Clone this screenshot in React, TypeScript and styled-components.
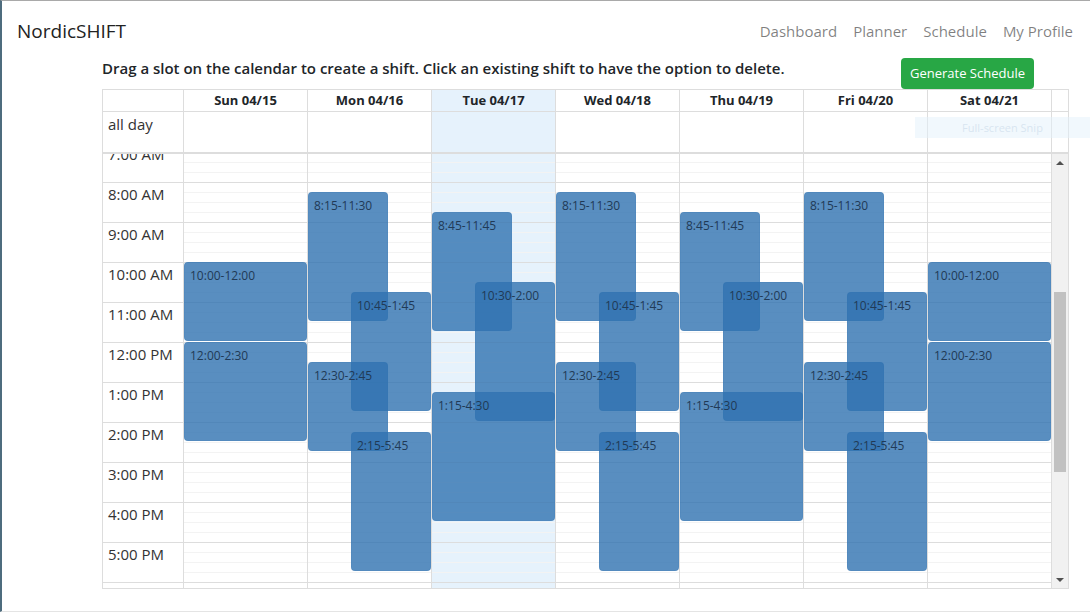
import React from 'react';
import styled, { createGlobalStyle } from 'styled-components';

const GlobalStyle = createGlobalStyle`
  html, body { margin: 0; padding: 0; background: #fff; }
  body { font-family: "Open Sans", "Noto Sans", sans-serif; color: #212529; }
  * { box-sizing: border-box; }
`;

const HOUR_PX = 40;
const FIRST_HOUR = 7;
const HOURS = [7, 8, 9, 10, 11, 12, 13, 14, 15, 16, 17, 18];

const Frame = styled.div`
  position: relative;
  width: 1090px;
  height: 612px;
  overflow: hidden;
  border-left: 2px solid #4e6c7e;
  border-top: 1px solid #a9a9a9;
  border-bottom: 1px solid #e4e4e4;
  display: flex;
  flex-direction: column;
`;

const Navbar = styled.nav`
  height: 57px;
  padding: 2px 9px 0 15px;
  display: flex;
  align-items: center;
`;

const Brand = styled.div`
  font-size: 19px;
  color: #222;
`;

const NavLinks = styled.div`
  margin-left: auto;
  display: flex;
`;

const NavLink = styled.a`
  padding: 0 8px;
  font-size: 15px;
  color: rgba(0, 0, 0, 0.5);
  text-decoration: none;
`;

const Toolbar = styled.div`
  margin-left: 100px;
  width: 967px;
  height: 31px;
  padding-right: 35px;
  display: flex;
  justify-content: space-between;
  align-items: flex-start;
`;

const Instructions = styled.div`
  font-size: 15px;
  font-weight: 600;
  line-height: 21px;
  color: #212529;
`;

const GreenButton = styled.button`
  height: 31px;
  padding: 0 9px;
  border: none;
  border-radius: 4px;
  background: #28a745;
  color: #fff;
  font-family: "Open Sans", sans-serif;
  font-size: 13px;
  line-height: 31px;
`;

const Calendar = styled.div`
  margin-left: 100px;
  width: 967px;
  border: 1px solid #ddd;
`;

const COLS = '81px repeat(7, 124px) 16px';

const HeadRow = styled.div`
  display: grid;
  grid-template-columns: ${COLS};
  border-bottom: 1px solid #ddd;
`;

const HeadCell = styled.div<{ $today?: boolean; $last?: boolean }>`
  height: 21px;
  line-height: 21px;
  text-align: center;
  font-size: 13px;
  font-weight: 700;
  color: #212529;
  background: ${(p) => (p.$today ? '#e6f2fc' : 'transparent')};
  border-right: ${(p) => (p.$last ? 'none' : '1px solid #ddd')};
`;

const AllDayRow = styled.div`
  display: grid;
  grid-template-columns: ${COLS};
  border-bottom: 2px solid #ddd;
`;

const AllDayCell = styled.div<{ $today?: boolean; $last?: boolean }>`
  height: 40px;
  padding: 2px 5px 0;
  font-size: 15px;
  line-height: 20px;
  color: #333;
  background: ${(p) => (p.$today ? '#e6f2fc' : 'transparent')};
  border-right: ${(p) => (p.$last ? 'none' : '1px solid #ddd')};
`;

const Body = styled.div`
  display: flex;
  height: 434px;
`;

const Viewport = styled.div`
  flex: 1;
  overflow: hidden;
`;

const TimeGrid = styled.div`
  margin-top: -12px;
  display: grid;
  grid-template-columns: 81px repeat(7, 124px);
  grid-template-rows: repeat(${HOURS.length}, ${HOUR_PX}px);
`;

const AxisLabel = styled.div<{ $row: number }>`
  grid-column: 1;
  grid-row: ${(p) => p.$row};
  border-top: 1px solid #ddd;
  border-right: 1px solid #ddd;
  padding: 1px 0 0 5px;
  font-size: 15px;
  line-height: 20px;
  color: #333;
  white-space: nowrap;
`;

const DayColumn = styled.div<{ $col: number; $today?: boolean }>`
  position: relative;
  grid-column: ${(p) => p.$col};
  grid-row: 1 / -1;
  border-right: 1px solid #ddd;
  background-color: ${(p) => (p.$today ? '#e6f2fc' : '#fff')};
  background-image:
    repeating-linear-gradient(to bottom, #ddd 0 1px, transparent 1px ${HOUR_PX}px),
    repeating-linear-gradient(to bottom, #f3f3f3 0 1px, transparent 1px 10px);
`;

const Event = styled.div`
  position: absolute;
  border-radius: 4px;
  background: rgba(47, 114, 176, 0.8);
  border: 1px solid rgba(47, 114, 176, 0.15);
  padding: 4px 5px;
  font-size: 12px;
  line-height: 18px;
  color: #213a56;
  white-space: nowrap;
  overflow: hidden;
`;

const Scrollbar = styled.div`
  width: 16px;
  background: #f1f1f1;
  display: flex;
  flex-direction: column;
`;

const ScrollArrow = styled.div<{ $down?: boolean }>`
  height: 17px;
  display: flex;
  align-items: center;
  justify-content: center;
  &::after {
    content: '';
    width: 0;
    height: 0;
    border-left: 4px solid transparent;
    border-right: 4px solid transparent;
    ${(p) => (p.$down ? 'border-top: 4px solid #505050;' : 'border-bottom: 4px solid #505050;')}
  }
`;

const ScrollTrack = styled.div`
  flex: 1;
  display: flex;
  flex-direction: column;
  padding-top: 121px;
`;

const ScrollThumb = styled.div`
  height: 180px;
  margin: 0 2px;
  background: #c1c1c1;
`;

const SnipHint = styled.div`
  position: absolute;
  left: 913px;
  top: 116px;
  width: 175px;
  height: 21px;
  background: rgba(228, 241, 252, 0.5);
  color: rgba(205, 220, 235, 0.7);
  font-size: 11px;
  line-height: 21px;
  text-align: center;
`;

type Slot = 'full' | 'left' | 'right';
type Shift = { start: number; end: number; label: string; slot: Slot };

const MWF: Shift[] = [
  { start: 8.25, end: 11.5, label: '8:15-11:30', slot: 'left' },
  { start: 10.75, end: 13.75, label: '10:45-1:45', slot: 'right' },
  { start: 12.5, end: 14.75, label: '12:30-2:45', slot: 'left' },
  { start: 14.25, end: 17.75, label: '2:15-5:45', slot: 'right' },
];
const TT: Shift[] = [
  { start: 8.75, end: 11.75, label: '8:45-11:45', slot: 'left' },
  { start: 10.5, end: 14, label: '10:30-2:00', slot: 'right' },
  { start: 13.25, end: 16.5, label: '1:15-4:30', slot: 'full' },
];
const WKD: Shift[] = [
  { start: 10, end: 12, label: '10:00-12:00', slot: 'full' },
  { start: 12, end: 14.5, label: '12:00-2:30', slot: 'full' },
];

const DAYS: { title: string; today?: boolean; shifts: Shift[] }[] = [
  { title: 'Sun 04/15', shifts: WKD },
  { title: 'Mon 04/16', shifts: MWF },
  { title: 'Tue 04/17', today: true, shifts: TT },
  { title: 'Wed 04/18', shifts: MWF },
  { title: 'Thu 04/19', shifts: TT },
  { title: 'Fri 04/20', shifts: MWF },
  { title: 'Sat 04/21', shifts: WKD },
];

const fmtHour = (h: number) => {
  const hr = h % 12 === 0 ? 12 : h % 12;
  return `${hr}:00 ${h < 12 ? 'AM' : 'PM'}`;
};

const slotBox = (slot: Slot) => {
  if (slot === 'left') return { left: 0, width: 80 };
  if (slot === 'right') return { left: 43, width: 80 };
  return { left: 0, width: 123 };
};

export default function App() {
  return (
    <>
      <GlobalStyle />
      <Frame>
        <Navbar>
          <Brand>NordicSHIFT</Brand>
          <NavLinks>
            <NavLink>Dashboard</NavLink>
            <NavLink>Planner</NavLink>
            <NavLink>Schedule</NavLink>
            <NavLink>My Profile</NavLink>
          </NavLinks>
        </Navbar>
        <Toolbar>
          <Instructions>
            Drag a slot on the calendar to create a shift. Click an existing shift to have the option to delete.
          </Instructions>
          <GreenButton>Generate Schedule</GreenButton>
        </Toolbar>
        <Calendar>
          <HeadRow>
            <HeadCell />
            {DAYS.map((d) => (
              <HeadCell key={d.title} $today={d.today}>
                {d.title}
              </HeadCell>
            ))}
            <HeadCell $last />
          </HeadRow>
          <AllDayRow>
            <AllDayCell>all day</AllDayCell>
            {DAYS.map((d) => (
              <AllDayCell key={d.title} $today={d.today} />
            ))}
            <AllDayCell $last />
          </AllDayRow>
          <Body>
            <Viewport>
              <TimeGrid>
                {HOURS.map((h, i) => (
                  <AxisLabel key={h} $row={i + 1}>
                    {fmtHour(h)}
                  </AxisLabel>
                ))}
                {DAYS.map((d, i) => (
                  <DayColumn key={d.title} $col={i + 2} $today={d.today}>
                    {d.shifts.map((s) => {
                      const box = slotBox(s.slot);
                      return (
                        <Event
                          key={s.label}
                          style={{
                            top: (s.start - FIRST_HOUR) * HOUR_PX,
                            height: (s.end - s.start) * HOUR_PX - 1,
                            left: box.left,
                            width: box.width,
                          }}
                        >
                          {s.label}
                        </Event>
                      );
                    })}
                  </DayColumn>
                ))}
              </TimeGrid>
            </Viewport>
            <Scrollbar>
              <ScrollArrow />
              <ScrollTrack>
                <ScrollThumb />
              </ScrollTrack>
              <ScrollArrow $down />
            </Scrollbar>
          </Body>
        </Calendar>
        <SnipHint>Full-screen Snip</SnipHint>
      </Frame>
    </>
  );
}
